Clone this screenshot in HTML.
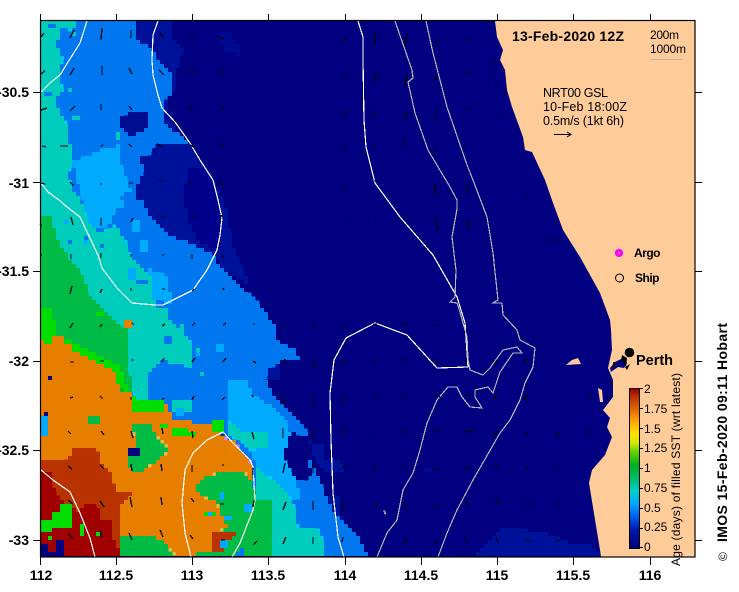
<!DOCTYPE html>
<html>
<head>
<meta charset="utf-8">
<title>IMOS SST map</title>
<style>
html,body{margin:0;padding:0;background:#fff;width:739px;height:592px;overflow:hidden}
svg{display:block;position:absolute;left:0;top:0}
text{font-family:"Liberation Sans",sans-serif;fill:#000}
</style>
</head>
<body>
<svg width="739" height="592" viewBox="0 0 739 592" xmlns="http://www.w3.org/2000/svg">
<defs>
<filter id="px" filterUnits="userSpaceOnUse" primitiveUnits="userSpaceOnUse" x="41" y="21" width="654" height="536" color-interpolation-filters="sRGB">
<feFlood x="41" y="21" width="1" height="1" flood-color="#000"/>
<feComposite x="41" y="21" width="4" height="4"/>
<feTile x="41" y="21" width="654" height="536" result="a"/>
<feComposite in="SourceGraphic" in2="a" operator="in" result="s"/>
<feOffset in="s" dx="1" dy="0" result="s1"/>
<feMerge result="s2"><feMergeNode in="s"/><feMergeNode in="s1"/></feMerge>
<feOffset in="s2" dx="0" dy="1" result="s3"/>
<feMerge result="s4"><feMergeNode in="s2"/><feMergeNode in="s3"/></feMerge>
<feMorphology in="s4" operator="dilate" radius="1"/>
</filter>
<linearGradient id="cb" x1="0" y1="1" x2="0" y2="0">
<stop offset="0" stop-color="#000078"/><stop offset=".12" stop-color="#0018b0"/><stop offset=".2" stop-color="#0060f0"/><stop offset=".28" stop-color="#00a8ff"/><stop offset=".36" stop-color="#00d0c8"/><stop offset=".44" stop-color="#00bb66"/><stop offset=".52" stop-color="#00b020"/><stop offset=".6" stop-color="#60d000"/><stop offset=".66" stop-color="#d0e800"/><stop offset=".72" stop-color="#ffe000"/><stop offset=".8" stop-color="#ffa000"/><stop offset=".88" stop-color="#d86000"/><stop offset=".95" stop-color="#b83000"/><stop offset="1" stop-color="#980000"/>
</linearGradient>
</defs>

<rect x="41" y="21" width="654" height="536" fill="#000080"/>

<g filter="url(#px)" shape-rendering="crispEdges">
<rect x="41" y="21" width="654" height="536" fill="#000080"/>
<!-- dark blue -->
<path fill="#001199" d="M137 20H171L172 40 183 50 178 62 173 92 166 100 170 115 178 135 190 145 205 165 215 185 225 205 232 245 250 285 225 270 213 255 183 240 167 235 148 215 143 200 137 200V20Z"/>
<path fill="#00008c" d="M190 165 205 170 215 190 222 215 218 250 200 243 190 225 182 195Z"/>
<path fill="#000a90" d="M218 30 228 30 240 48 240 55 225 50 218 38Z"/>
<path fill="#001199" d="M305 440 322 445 325 460 343 462 343 472 325 470 318 464ZM325 495 340 497 342 525 330 525ZM268 362H280V378H268Z"/>
<path fill="#001199" d="M480 550 495 535 500 528 530 530 555 535 562 541 590 545 600 552 601 557H470Z"/>
<!-- blue -->
<path fill="#0077ee" d="M41 20H137V40L150 48 161 63 173 77 172 92 162 100V120L177 133 188 143 155 142 150 153 140 157 143 170 137 183V200H143L148 215 167 235 183 240 213 255 217 265 230 275 240 285 256 300 267 315 275 325V340L295 350 298 358 280 360 268 370 265 378 273 395 283 407 295 418 310 435 305 450 320 480 323 490 337 517 350 530 358 537 368 557H41Z"/>
<path fill="#000d90" d="M118 115 127 113 146 113V128L130 137 118 125Z"/>
<path fill="#000080" d="M283 460 283 445 290 432 305 435 312 450 305 460 312 470 308 482 295 480Z"/>
<!-- light blue -->
<path fill="#00aaff" d="M72 160 85 157 105 148 118 145 121 165 130 190 120 196 115 205 112 220 100 230 90 225 82 200Z"/>
<path fill="#00aaff" d="M148 268 165 275 172 300 165 305 150 302Z"/>
<path fill="#00aaff" d="M147 317 170 320 172 333 148 335Z"/>
<path fill="#00aaff" d="M227 380 245 380 253 395 270 405 285 420 290 432 283 457 295 480 300 497 283 500 265 480 255 465 250 445 240 433 227 420Z"/>
<!-- teal -->
<path fill="#00ccbb" d="M41 20H76V27L60 33 55 45 62 55 60 75 62 90 55 100 60 115 68 125V140L72 150V157L68 175 72 190 80 200 90 225 100 232 115 225 125 240 130 255 140 265 150 275V300L165 305 170 320 193 345V367L160 360 147 375V400H135L130 380 41 400Z"/>
<path fill="#00ccbb" d="M173 400 190 400 190 413 172 413Z"/>
<path fill="#00ccbb" d="M227 420 240 430 267 432 267 448 250 450 240 440 227 435Z"/>
<path fill="#00ccbb" d="M255 467 283 487 293 503 298 527 320 530 325 557H273V535L260 510 255 495Z"/>
<path fill="#00aaff" d="M258 505 270 510 270 520 258 520Z"/>
<!-- green -->
<path fill="#00bb44" d="M41 217H52L55 235 67 255 83 275 90 295 110 315 127 330 128 365 134 400H41Z"/>
<path fill="#00dd00" d="M41 306H50V320H55V342H41ZM60 338H70V342H78V346H86V350H96V354H104V358H112V364H118V372H122V384H128V396H136V404H122V386H116V378H108V372H96V366H84V360H74V352H66V346H60Z"/>
<path fill="#00dd00" d="M94 312H102V316H94Z"/>
<!-- orange -->
<path fill="#e67e00" d="M41 342H52V335H63V342H70V350H78V354H86V358H94V362H102V366H110V372H114V382H120V390H133V398H137V403H167V410H172V420H190V422H215V425L223 437 233 440 250 462V520L240 530 225 557H41Z"/>
<path fill="#e67e00" d="M125 319H133V328H125ZM130 347H133V353H130Z"/>
<!-- green patches -->
<path fill="#00bb44" d="M132 422 150 422 155 435 167 447V452L150 465 140 473H131L127 458 135 445Z"/>
<path fill="#00bb44" d="M195 487 203 477 222 471 243 470 250 480 255 490V520L240 550 232 557H197V550H215L213 533 227 527 215 500 203 497Z"/>
<path fill="#00bb44" d="M240 487 255 487 255 500 273 500V557H245L240 545Z"/>
<path fill="#00bb44" d="M120 537 135 535 150 535 165 542 170 550 177 557H120Z"/>
<path fill="#00bb44" d="M88 417H100V425H88Z"/>
<path fill="#b83300" d="M213 533 237 531 228 542 222 550H213Z"/>
<path fill="#00dd00" d="M133 400H163V410H133ZM172 428H186V435H172ZM186 430H197V437H186ZM210 420H222V430H210Z"/>
<path fill="#00dd00" d="M205 510H216V517H205ZM160 422H166V428H160Z"/>
<path fill="#000080" d="M128 448H140V455H128Z"/>
<!-- reds -->
<path fill="#b83300" d="M41 460 70 457 72 446 100 450V463L110 470V480L115 482V490H130V497L118 505V545L118 557H41Z"/>
<path fill="#a00000" d="M41 470 50 473 55 490 67 505 80 512 83 503H97L100 520H113V537L118 547V557H41Z"/>
<path fill="#b83300" d="M80 450H84V470H80ZM90 478H97V484H90Z"/>
<!-- bright patches on red -->
<path fill="#00dd00" d="M41 520H52V532H41ZM52 513H70V527H52ZM60 505H70V515H60ZM78 523H85V535H78ZM49 535H53V539H49ZM95 531H98V535H95Z"/>
<path fill="#000080" d="M41 545H48V557H41ZM48 550H65V557H48ZM55 540H65V550H55Z"/>
<path fill="#00aaff" d="M41 417H46V435H41Z"/>
<path fill="#000080" d="M42 410H48V417H42ZM49 377H53V381H49Z"/>
<path fill="#e67e00" d="M41 340H44V345H41Z"/>
<path fill="#00aaff" d="M176 407H184V417H176ZM198 500H201V504H198ZM208 510H212V516H208ZM219 492H225V498H219ZM245 505H250V512H245ZM225 515H230V521H225ZM218 540H226V546H218Z"/>
<!-- speckles -->
<path fill="#0077ee" d="M48 22H54V27H48ZM60 28H66V32H60ZM63 78H68V82H63ZM45 92H50V96H45ZM64 98H72V108H64ZM65 115H70V120H65Z"/>
<path fill="#00ccbb" d="M70 32H74V37H70ZM72 116H78V120H72ZM68 88H72V92H68ZM114 133H120V138H114Z"/>
<path fill="#00aaff" d="M100 150H108V160H100ZM62 220H68V225H62ZM82 238H86V242H82ZM128 268H136V278H128ZM132 220H140V230H132ZM140 240H148V250H140ZM115 200H122V206H115ZM104 213H112V218H104Z"/>
<path fill="#0077ee" d="M66 238H70V242H66ZM82 235H86V239H82ZM136 278H144V282H136ZM140 278H148V284H140ZM98 242H102V246H98ZM155 300H162V306H155ZM175 318H181V325H175ZM165 335H172V342H165Z"/>
<path fill="#00ccbb" d="M195 347H199V353H195ZM200 370H205V376H200ZM178 325H182V332H178Z"/>
<path fill="#00aaff" d="M194 350H200V356H194ZM215 345H222V350H215Z"/>
<path fill="#000a90" d="M425 468H430V472H425Z"/>
</g>

<!-- land -->
<path fill="#ffcc99" d="M495 21 497 37 503 50 500 60 505 70 507 90 512 107 523 137 525 150 532 152 545 180 553 203 563 230 580 257 600 293 610 320 611 330 612 350 608 368 613 380 613 397 603 410 610 418 607 427 612 437 605 455 592 470 589 483 600 550 601 557H695V21Z"/>
<path fill="#000080" d="M610 368 615 362 623 358 627 363 624 368 618 367 611 372Z"/>
<path fill="#ffcc99" d="M566 365 572 360 578 358 581 364ZM598 388 602 390 603 402 600 402Z"/>
<path fill="#000" d="M613 362h2v6h-2ZM622 355l5 3-1 9-2-5-3-1ZM625 367l5-3-3 6Z"/>
<path fill="none" stroke="#000" stroke-width="1" d="M504 92h2M494 63h3M496 72h-2M497 82l-2 1M500 115h3M528 195h-2M545 240h3M555 240l4 0M607 382h2M590 392v6M590 430v4"/>

<!-- contours -->
<g fill="none" stroke="#fff" stroke-width="1.2" shape-rendering="crispEdges">
<path d="M87 21 80 43 68 62 60 75 50 83 41 92"/>
<path d="M158 21 153 35 152 60 153 75 158 95 162 108 175 122 190 143 200 160 213 180 218 200 222 218 220 235 217 250 207 270 193 290 173 300 163 305 155 305 132 303 117 288 102 268 98 255 80 217 67 207 59 200 48 192 41 183"/>
<path d="M41 470 53 480 70 492 80 513 90 538 95 557"/>
<path d="M191 557 185 533 182 503 185 470 193 453 207 440 223 432 233 443 250 460 253 467 255 500 253 510 240 543 232 557"/>
<path d="M358 21 363 37 363 60 364 120 366 147 375 183 400 217 433 255 457 297 465 323 468 367 437 368 407 335 375 323 346 338 334 360 330 393 331 440 333 493 338 537 344 557"/>
</g>
<g fill="none" stroke="#b4b4b4" stroke-width="1.2" shape-rendering="crispEdges">
<path d="M395 21 405 50 412 70 413 78 408 82 415 113 428 150 450 187 457 200 457 209 452 237 456 270 455 297 450 302 457 303 460 312 467 337 468 360 470 370 483 375 490 368 503 350 517 347 522 353 513 353 500 372 493 393 488 387 475 390 475 397 482 408 470 407 462 397 457 387 448 387 437 400 427 423 420 450 413 473 403 490 397 520 387 533 377 557"/>
<path d="M426 21 433 53 447 107 467 165 473 180 487 217 493 253 498 300 493 303 502 303 503 315 517 330 520 340 535 348 533 367 525 383 520 400 510 420 500 433 473 480 457 510 447 533 438 557"/>
<path d="M383 511h2v2h1M384 513l2 1"/>
</g>

<!-- velocity arrows -->
<path fill="none" stroke="#000" stroke-width="1.3" shape-rendering="crispEdges" d="
M41 37l3-4M70 38l4-8M101 40l1-12M131 38v-8M160 33l3 5M190 36l4 2M220 37l4 2M344 42l2-5M374 45l2-12M405 46l2-12M435 45l3-5M465 38l4 0
M41 74l4-3M70 75l4-7M102 75v-9M129 68l3 6M159 70l5 5M190 71l4 2M220 71l4 2M344 78l3-5M374 82l2-9M405 86l2-12M435 80l2-5M465 73l4 1
M41 110l6-2M70 111l5-5M101 110v-6M129 106l3 4M188 107l5 3M220 107l4 2M344 115l3-5M373 116l2-5M405 120l2-8M436 120v-9M465 110l4-1
M42 146l4 1M60 146l8 0M101 146l2-1M129 144l3 3M157 144l6 3M190 145l4 2M219 143l4 3M344 150l2-3M373 149l2-2M405 147v-9M436 155v-9M465 146v1
M41 183l4 1M70 182l4 4M101 185v-2M129 183h4M159 181h5M189 182l4 2M220 181l4 4M342 188h5M374 181h2M405 181l1 2M435 184l1 12M467 185l1 8
M40 224l2 2M71 217l2 8M101 218v8M131 222l2-4M161 217h4M191 216l4 2M221 215l3 4M344 217l2 0M375 218l1 1M405 217v3M435 218l3 12M467 219l2 10
M41 255h1M71 254v5M101 258v-5M131 257v-3M162 255h2M192 254v5M222 255l1 3
M70 294l2-8M100 293l2-4M131 291v-3M162 289h3M192 291l2-2M223 288l1 2
M70 328l3-5M100 327l2-3M132 323l2 2M162 326l3-2M192 326l3-3M223 325l3-2M253 324h2M283 327l2-3M313 327l2-3M342 328l3-2M373 324l4 0M403 323l4 2M434 324l4 1
M70 362h4M100 361h4M131 360h3M162 362l2-4M192 362l3-4M223 362l3-4M253 361l3 2M283 364l2-5M313 367l2-6M342 364l3-3M372 361h4M402 358l5 3M434 360l4 2M465 361l2-1M497 360l-3 5M527 358l-3 6
M70 398l3-1M100 396l3 3M131 400v-3M162 400l2-2M192 400l2-4M222 400l3-3M253 397l-1-2M283 397l1 8M313 397v9M342 402l3-5M373 397l4-1M403 394l4 3M435 395l5 2M467 397l4-3M497 393l-3 6M527 394l-3 6
M68 431l3 3M101 431l3 4M131 431l2 7M162 428l1 6M192 431l1 7M221 435h4M252 432l2 7M283 428v10M313 429v10M342 434l3-5M373 434l1 0M403 430l4 3M435 431l5 1M465 432l8-1M497 431l-3 5M527 432l-2 3M559 432l-3 5
M68 466l4 3M100 465l4 4M131 464l1 7M161 464l1 7M192 465v7M222 465h2M253 468v7M283 473l2-10M313 473v-10M342 468l4-3M373 469l2-3M403 468h5M433 469h6M464 468h7M495 464l4 4M525 469l3-2M555 469h4
M68 500l5 4M100 501l4 6M130 497l2 10M161 497l1 8M191 498l3 4M220 504h4M253 507l1-7M283 510l3-8M313 510v-9M342 510l2-7M374 508l3-4M404 508l3-4M434 508l5-2M466 501l3 4M496 499l3 5M526 504h5M556 504l4 0
M68 533l5 6M100 530l2 8M129 533l3 7M160 530l3 7M190 535l3 4M221 540h4M253 545l4-4M283 544l3-7M313 544v-7M342 542l1-5M404 544l3-5M434 544l3-3M465 537l2 5M496 538l2 4M526 540l4 1M556 540l3 1"/>

<!-- frame and ticks -->
<rect x="40.5" y="20.5" width="654.5" height="536.5" fill="none" stroke="#000" stroke-width="1.2"/>
<path fill="none" stroke="#000" stroke-width="1" d="M40.5 14v6M116.5 14v6M192.5 14v6M268.5 14v6M345.5 14v6M421.5 14v6M497.5 14v6M573.5 14v6M650.5 14v6M40.5 557v8M116.5 557v8M192.5 557v8M268.5 557v8M345.5 557v8M421.5 557v8M497.5 557v8M573.5 557v8M650.5 557v8M33 92.5h7M33 182.5h7M33 271.5h7M33 361.5h7M33 450.5h7M33 540.5h7M695 92.5h7M695 182.5h7M695 271.5h7M695 361.5h7M695 450.5h7M695 540.5h7"/>

<!-- axis labels -->
<g font-size="14" font-weight="bold" text-anchor="end">
<text x="29" y="97">-30.5</text>
<text x="29" y="188">-31</text>
<text x="29" y="276">-31.5</text>
<text x="29" y="366">-32</text>
<text x="29" y="455">-32.5</text>
<text x="29" y="545">-33</text>
</g>
<g font-size="14" font-weight="bold" text-anchor="middle">
<text x="41" y="580">112</text>
<text x="116" y="580">112.5</text>
<text x="192" y="580">113</text>
<text x="268" y="580">113.5</text>
<text x="345" y="580">114</text>
<text x="421" y="580">114.5</text>
<text x="497" y="580">115</text>
<text x="573" y="580">115.5</text>
<text x="650" y="580">116</text>
</g>

<!-- annotations -->
<text x="512" y="41" font-size="14" font-weight="bold" textLength="112">13-Feb-2020 12Z</text>
<text x="650" y="39" font-size="12" textLength="29">200m</text>
<text x="650" y="53" font-size="12" textLength="36">1000m</text>
<path d="M650 59.5h33" stroke="#b4b4b4" stroke-width="1"/>
<text x="543" y="97" font-size="12.5" textLength="65">NRT00 GSL</text>
<text x="543" y="111" font-size="12.5" textLength="84">10-Feb 18:00Z</text>
<text x="543" y="125" font-size="12.5" textLength="81">0.5m/s (1kt 6h)</text>
<path d="M554 134.5h17M567 132l4 2.5-4 2.5" fill="none" stroke="#000" stroke-width="1"/>

<circle cx="619" cy="253" r="2.6" fill="#ff80ff" stroke="#ff00ff" stroke-width="3"/>
<text x="634" y="257" font-size="12" font-weight="bold" textLength="26.5">Argo</text>
<circle cx="619.5" cy="278" r="4" fill="none" stroke="#000" stroke-width="1"/>
<text x="635" y="282" font-size="12" font-weight="bold" textLength="24.5">Ship</text>
<circle cx="629.5" cy="352.5" r="4.8" fill="#000"/>
<text x="636" y="365" font-size="14.5" font-weight="bold" textLength="37">Perth</text>

<!-- colour bar -->
<rect x="629.5" y="388.5" width="10" height="160" fill="url(#cb)" stroke="#000" stroke-width="1"/>
<path fill="none" stroke="#000" stroke-width="1" d="M640 388.5h3M640 408.5h3M640 428.5h3M640 448.5h3M640 468.5h3M640 488.5h3M640 508.5h3M640 528.5h3M640 547.5h3"/>
<g font-size="12">
<text x="644" y="393">2</text>
<text x="644" y="413">1.75</text>
<text x="644" y="433">1.5</text>
<text x="644" y="452">1.25</text>
<text x="644" y="472">1</text>
<text x="644" y="492">0.75</text>
<text x="644" y="512">0.5</text>
<text x="644" y="531">0.25</text>
<text x="644" y="551">0</text>
</g>
<text transform="translate(680,566) rotate(-90)" font-size="12" textLength="193">Age (days) of filled SST (wrt latest)</text>
<text transform="translate(727,542) rotate(-90)" font-size="14" font-weight="bold" textLength="219">IMOS 15-Feb-2020 09:11 Hobart</text>
<text transform="translate(727,561) rotate(-90)" font-size="12" textLength="10">©</text>
</svg>
</body>
</html>
